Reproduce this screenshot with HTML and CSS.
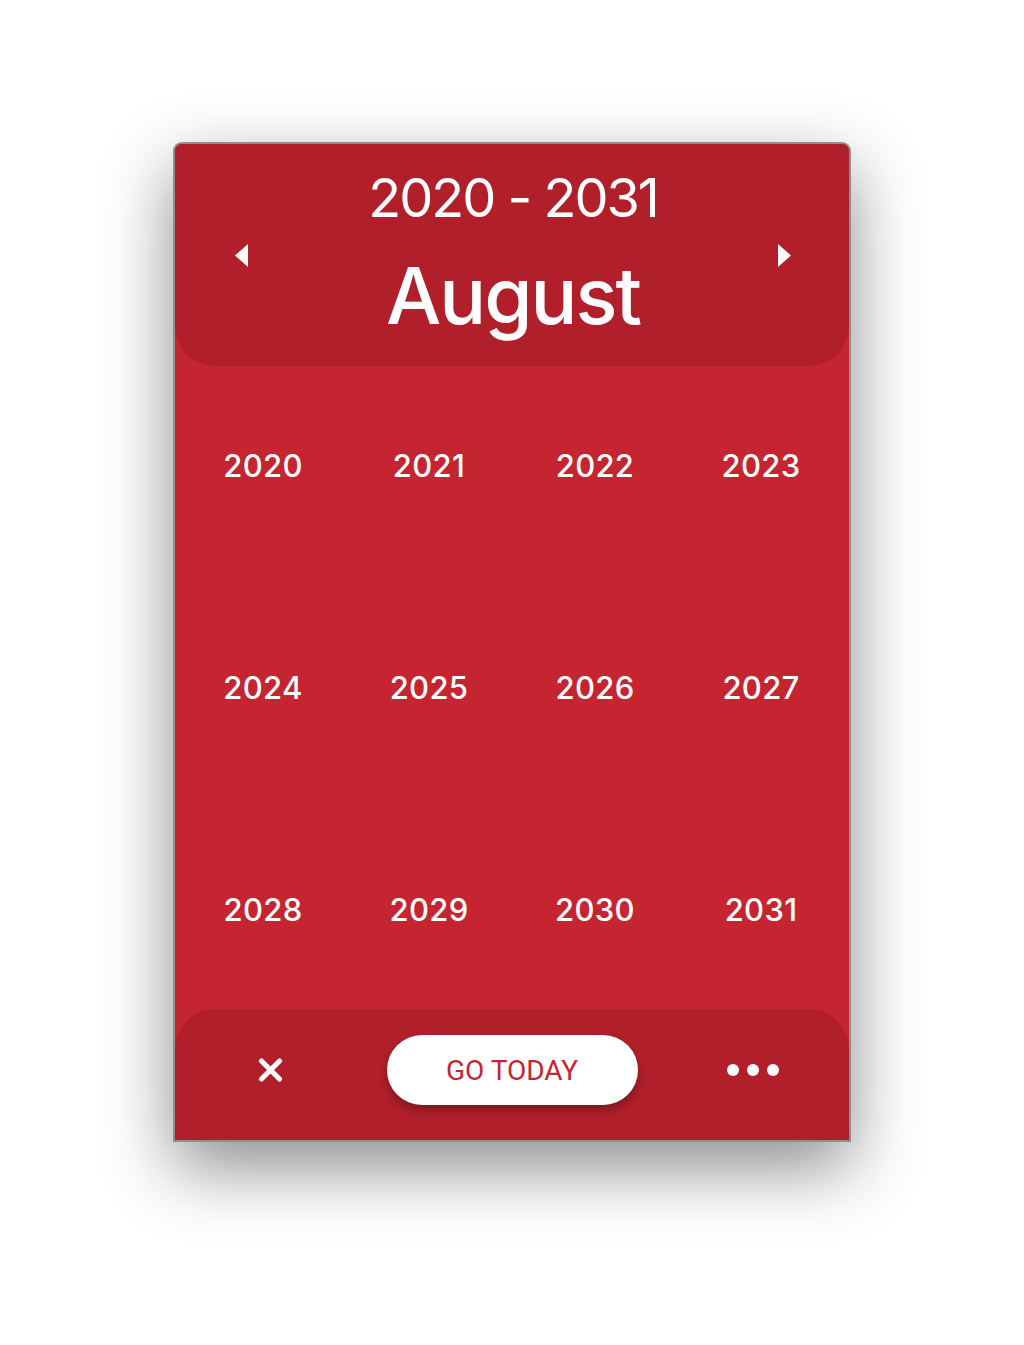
FILE: index.html
```html
<!DOCTYPE html>
<html lang="en">
<head>
<meta charset="utf-8">
<title>Year picker</title>
<link rel="stylesheet" href="styles.css">
</head>
<body>
<div class="page">
  <div class="card">
    <header class="head">
      <button class="arrow" aria-label="Previous">
        <svg width="13" height="23" viewBox="0 0 13 23"><path d="M13 0 L13 23 L0 11.5 Z" fill="#fff"/></svg>
      </button>
      <div class="titles">
        <div class="range">2020 - 2031</div>
        <div class="month">August</div>
      </div>
      <button class="arrow" aria-label="Next">
        <svg width="13" height="23" viewBox="0 0 13 23"><path d="M0 0 L0 23 L13 11.5 Z" fill="#fff"/></svg>
      </button>
    </header>
    <main class="years">
      <div class="year">2020</div>
      <div class="year">2021</div>
      <div class="year">2022</div>
      <div class="year">2023</div>
      <div class="year">2024</div>
      <div class="year">2025</div>
      <div class="year">2026</div>
      <div class="year">2027</div>
      <div class="year">2028</div>
      <div class="year">2029</div>
      <div class="year">2030</div>
      <div class="year">2031</div>
    </main>
    <footer class="foot">
      <div class="side left">
        <svg class="close" width="25" height="24" viewBox="0 0 25 24"><path d="M3.5 3 L21.5 21 M21.5 3 L3.5 21" stroke="#fff" stroke-width="5" stroke-linecap="round"/></svg>
      </div>
      <button class="today">GO TODAY</button>
      <div class="side right">
        <span class="dot"></span><span class="dot"></span><span class="dot"></span>
      </div>
    </footer>
  </div>
</div>
</body>
</html>
```
FILE: styles.css
```css
html, body {
  margin: 0;
  padding: 0;
  background: #ffffff;
}
body {
  font-family: Inter, "Noto Sans", sans-serif;
}
.page {
  display: flex;
  justify-content: center;
  padding-top: 142px;
  height: 1345px;
  box-sizing: border-box;
}
.card {
  width: 678px;
  height: 1000px;
  box-sizing: border-box;
  border: 2px solid #8e8e8e;
  border-radius: 9px 9px 0 0;
  background: #c42530;
  overflow: hidden;
  display: flex;
  flex-direction: column;
  box-shadow: 0 26px 70px rgba(0, 0, 0, 0.45);
}
.head {
  height: 222px;
  flex: none;
  background: #b1202a;
  border-radius: 0 0 40px 40px;
  display: flex;
  align-items: flex-start;
  justify-content: space-between;
  padding: 0 58px 0 60px;
  color: #fff;
}
.arrow {
  align-self: center;
  background: none;
  border: 0;
  padding: 0;
  display: flex;
  width: 13px;
  height: 23px;
}
.titles {
  display: flex;
  flex-direction: column;
  align-items: center;
  padding-top: 24px;
  gap: 20px;
}
.range {
  font-size: 54px;
  line-height: 60px;
  font-weight: 400;
  letter-spacing: -2px;
}
.month {
  font-size: 78px;
  line-height: 96px;
  font-weight: 500;
  letter-spacing: -2px;
}
.years {
  flex: 1;
  display: grid;
  grid-template-columns: repeat(4, 166px);
  grid-template-rows: repeat(3, 60px);
  row-gap: 162px;
  justify-content: center;
  align-content: center;
  color: #fff;
}
.year {
  display: flex;
  align-items: center;
  justify-content: center;
  font-size: 31px;
  font-weight: 500;
  letter-spacing: 0.3px;
}
.foot {
  height: 131px;
  flex: none;
  box-sizing: border-box;
  padding-bottom: 9px;
  background: #b1202a;
  border-radius: 40px 40px 0 0;
  display: grid;
  grid-template-columns: 1fr 251px 1fr;
  align-items: center;
}
.side {
  display: flex;
  align-items: center;
}
.left {
  padding-left: 83px;
}
.right {
  padding-left: 89px;
  gap: 8px;
}
.dot {
  width: 12px;
  height: 12px;
  border-radius: 50%;
  background: #fff;
}
.close {
  display: block;
}
.today {
  height: 70px;
  border: 0;
  border-radius: 35px;
  background: #fff;
  color: #c42530;
  font-family: Roboto, "Liberation Sans", sans-serif;
  font-size: 28px;
  font-weight: 400;
  box-shadow: 0 5px 10px rgba(0, 0, 0, 0.3);
  padding: 0;
}
```
